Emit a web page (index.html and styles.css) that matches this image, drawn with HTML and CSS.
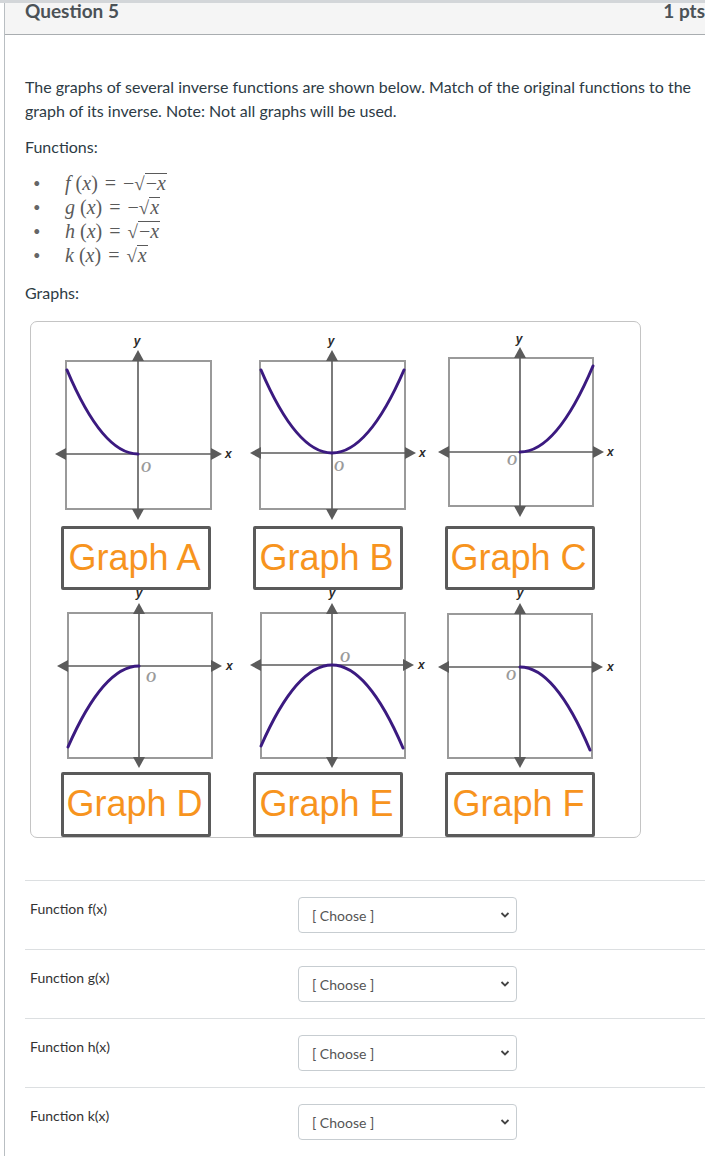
FILE: index.html
```html
<!DOCTYPE html>
<html>
<head>
<meta charset="utf-8">
<link rel="stylesheet" href="styles.css">
</head>
<body>
<div class="topband"></div>
<div class="question">
  <div class="q-header"><span class="q-title">Question 5</span><span class="q-pts">1 pts</span></div>
  <div class="q-body">
    <p>The graphs of several inverse functions are shown below. Match of the original functions to the graph of its inverse. Note: Not all graphs will be used.</p>
    <p>Functions:</p>
    <ul class="fn-list">
      <li><span class="math"><i>f</i><span class="sp"></span>(<i>x</i>)<span class="eq">=</span>−<span class="root"><span class="sqrt">√</span><span class="rad">−<i>x</i></span></span></span></li>
      <li><span class="math"><i>g</i><span class="sp"></span>(<i>x</i>)<span class="eq">=</span>−<span class="root"><span class="sqrt">√</span><span class="rad"><i>x</i></span></span></span></li>
      <li><span class="math"><i>h</i><span class="sp"></span>(<i>x</i>)<span class="eq">=</span><span class="root"><span class="sqrt">√</span><span class="rad">−<i>x</i></span></span></span></li>
      <li><span class="math"><i>k</i><span class="sp"></span>(<i>x</i>)<span class="eq">=</span><span class="root"><span class="sqrt">√</span><span class="rad"><i>x</i></span></span></span></li>
    </ul>
    <p class="graphs-title">Graphs:</p>

    <div class="graphs">
      <!-- Graph A -->
      <div class="cell row1">
        <svg class="plot p1" viewBox="0 0 192 190" width="192" height="190">
          <rect x="16" y="28" width="145" height="148" class="frame"/>
          <line x1="8" y1="121" x2="169" y2="121" class="axis"/>
          <line x1="88" y1="20" x2="88" y2="184" class="axis"/>
          <polygon points="5,121 16,115 16,127" class="arrow"/>
          <polygon points="172,121 161,115 161,127" class="arrow"/>
          <polygon points="88,17 82,28 94,28" class="arrow"/>
          <polygon points="88,187 82,176 94,176" class="arrow"/>
          <path d="M17 37 Q52.5 121 88 121" class="curve"/>
          <text x="87" y="12" class="lbl" text-anchor="middle">y</text>
          <text x="175" y="125" class="lbl">x</text>
          <text x="96" y="139" class="orig" text-anchor="middle">O</text>
        </svg>
        <div class="gname">Graph A</div>
      </div>
      <!-- Graph B -->
      <div class="cell row1">
        <svg class="plot p1" viewBox="0 0 192 190" width="192" height="190">
          <rect x="18" y="28" width="145" height="148" class="frame"/>
          <line x1="11" y1="120" x2="171" y2="120" class="axis"/>
          <line x1="90" y1="20" x2="90" y2="184" class="axis"/>
          <polygon points="8,120 19,114 19,126" class="arrow"/>
          <polygon points="174,120 163,114 163,126" class="arrow"/>
          <polygon points="90,17 84,28 96,28" class="arrow"/>
          <polygon points="90,187 84,176 96,176" class="arrow"/>
          <path d="M19 37 Q54.5 120 90 120 Q126 120 162 37" class="curve"/>
          <text x="89" y="12" class="lbl" text-anchor="middle">y</text>
          <text x="177" y="124" class="lbl">x</text>
          <text x="97" y="138" class="orig" text-anchor="middle">O</text>
        </svg>
        <div class="gname">Graph B</div>
      </div>
      <!-- Graph C -->
      <div class="cell row1">
        <svg class="plot p1" viewBox="0 0 192 190" width="192" height="190">
          <rect x="15" y="25" width="144" height="148" class="frame"/>
          <line x1="7" y1="119" x2="167" y2="119" class="axis"/>
          <line x1="86" y1="17" x2="86" y2="181" class="axis"/>
          <polygon points="4,119 15,113 15,125" class="arrow"/>
          <polygon points="170,119 159,113 159,125" class="arrow"/>
          <polygon points="86,14 80,25 92,25" class="arrow"/>
          <polygon points="86,184 80,173 92,173" class="arrow"/>
          <path d="M86 119 Q122.5 119 159 33" class="curve"/>
          <text x="85" y="10" class="lbl" text-anchor="middle">y</text>
          <text x="173" y="123" class="lbl">x</text>
          <text x="78" y="132" class="orig" text-anchor="middle">O</text>
        </svg>
        <div class="gname">Graph C</div>
      </div>
      <!-- Graph D -->
      <div class="cell row2">
        <svg class="plot p2" viewBox="0 0 192 182" width="192" height="182">
          <rect x="18" y="23" width="144" height="145" class="frame"/>
          <line x1="10" y1="76" x2="169" y2="76" class="axis"/>
          <line x1="89" y1="16" x2="89" y2="175" class="axis"/>
          <polygon points="7,76 18,70 18,82" class="arrow"/>
          <polygon points="172,76 161,70 161,82" class="arrow"/>
          <polygon points="89,13 83,24 95,24" class="arrow"/>
          <polygon points="89,178 83,167 95,167" class="arrow"/>
          <path d="M18 157 Q53.5 76 89 76" class="curve"/>
          <text x="89" y="7" class="lbl" text-anchor="middle">y</text>
          <text x="176" y="80" class="lbl">x</text>
          <text x="101" y="92" class="orig" text-anchor="middle">O</text>
        </svg>
        <div class="gname tall">Graph D</div>
      </div>
      <!-- Graph E -->
      <div class="cell row2">
        <svg class="plot p2" viewBox="0 0 192 182" width="192" height="182">
          <rect x="19" y="23" width="144" height="145" class="frame"/>
          <line x1="11" y1="75" x2="169" y2="75" class="axis"/>
          <line x1="90" y1="16" x2="90" y2="175" class="axis"/>
          <polygon points="8,75 19,69 19,81" class="arrow"/>
          <polygon points="172,75 161,69 161,81" class="arrow"/>
          <polygon points="90,13 84,24 96,24" class="arrow"/>
          <polygon points="90,178 84,167 96,167" class="arrow"/>
          <path d="M19 156 Q54.5 75 90 75 Q125.5 75 161 158" class="curve"/>
          <text x="90" y="7" class="lbl" text-anchor="middle">y</text>
          <text x="176" y="79" class="lbl">x</text>
          <text x="103" y="72" class="orig" text-anchor="middle">O</text>
        </svg>
        <div class="gname tall">Graph E</div>
      </div>
      <!-- Graph F -->
      <div class="cell row2">
        <svg class="plot p2" viewBox="0 0 192 182" width="192" height="182">
          <rect x="14" y="24" width="144" height="144" class="frame"/>
          <line x1="7" y1="77" x2="166" y2="77" class="axis"/>
          <line x1="86" y1="16" x2="86" y2="175" class="axis"/>
          <polygon points="4,77 15,71 15,83" class="arrow"/>
          <polygon points="169,77 158,71 158,83" class="arrow"/>
          <polygon points="86,13 80,24 92,24" class="arrow"/>
          <polygon points="86,178 80,167 92,167" class="arrow"/>
          <path d="M86 77 Q121 77 156 160" class="curve"/>
          <text x="86" y="7" class="lbl" text-anchor="middle">y</text>
          <text x="173" y="81" class="lbl">x</text>
          <text x="77" y="90" class="orig" text-anchor="middle">O</text>
        </svg>
        <div class="gname tall">Graph F</div>
      </div>
    </div>

    <div class="answers">
      <div class="answer-row">
        <div class="answer-label">Function f(x)</div>
        <div class="select"><span>[ Choose ]</span><svg class="chev" viewBox="0 0 10 8" width="10" height="8"><path d="M1.5 2 L5 5.5 L8.5 2"/></svg></div>
      </div>
      <div class="answer-row">
        <div class="answer-label">Function g(x)</div>
        <div class="select"><span>[ Choose ]</span><svg class="chev" viewBox="0 0 10 8" width="10" height="8"><path d="M1.5 2 L5 5.5 L8.5 2"/></svg></div>
      </div>
      <div class="answer-row">
        <div class="answer-label">Function h(x)</div>
        <div class="select"><span>[ Choose ]</span><svg class="chev" viewBox="0 0 10 8" width="10" height="8"><path d="M1.5 2 L5 5.5 L8.5 2"/></svg></div>
      </div>
      <div class="answer-row">
        <div class="answer-label">Function k(x)</div>
        <div class="select"><span>[ Choose ]</span><svg class="chev" viewBox="0 0 10 8" width="10" height="8"><path d="M1.5 2 L5 5.5 L8.5 2"/></svg></div>
      </div>
    </div>
  </div>
</div>
</body>
</html>
```
FILE: styles.css
```css
html, body {
  margin: 0;
  padding: 0;
  overflow: hidden;
  background: #fff;
}
body {
  font-family: Lato, "Open Sans", sans-serif;
  color: #2d3b45;
  width: 705px;
  height: 1163px;
}
.topband {
  height: 3px;
  background: #d3d6d9;
}
.question {
  margin-left: 4px;
  width: 716px;
  border-left: 1px solid #b9bec2;
  border-right: 1px solid #b9bec2;
}
.q-header {
  display: flex;
  justify-content: space-between;
  height: 31px;
  background: #f5f5f5;
  border-bottom: 1px solid #a9adb0;
  padding: 0 16px 0 20px;
  font-weight: 700;
  font-size: 19px;
  line-height: 15px;
  color: #4b5257;
}
.q-body {
  padding: 40px 0 0 20px;
}
.q-body p {
  margin: 0 0 12px;
  font-size: 16px;
  line-height: 24px;
}
.fn-list {
  list-style: none;
  margin: 0 0 14px;
  padding: 0;
}
.fn-list li {
  height: 24px;
  line-height: 24px;
  display: flex;
  align-items: center;
}
.fn-list li::before {
  content: "\2022";
  display: inline-block;
  width: 40px;
  padding-left: 8px;
  box-sizing: border-box;
  color: #666;
  font-size: 13px;
}
.math {
  font-family: "Liberation Serif", "DejaVu Serif", serif;
  font-size: 20px;
  color: #5a5a5a;
  display: inline-flex;
  align-items: baseline;
  white-space: nowrap;
}
.math i {
  font-style: italic;
}
.sp {
  display: inline-block;
  width: 5px;
}
.eq {
  margin: 0 7px;
}
.root {
  display: inline-flex;
  align-items: baseline;
}
.sqrt {
  font-size: 19px;
}
.rad {
  border-top: 1px solid #5a5a5a;
  line-height: 17px;
  padding: 1px 1px 0 1px;
}
.graphs-title {
  margin-bottom: 16px !important;
}
.graphs {
  width: 611px;
  margin-left: 5px;
  box-sizing: border-box;
  border: 1px solid #c4c4c4;
  border-radius: 7px;
  padding: 11px 0 0 19px;
  display: grid;
  grid-template-columns: 192px 192px 192px;
}
.cell {
  display: flex;
  flex-direction: column;
}
.plot {
  display: block;
}
.frame {
  fill: #fff;
  stroke: #9a9a9a;
  stroke-width: 2;
}
.axis {
  stroke: #5b5b5b;
  stroke-width: 1.6;
}
.arrow {
  fill: #5b5b5b;
}
.curve {
  fill: none;
  stroke: #3b1a80;
  stroke-width: 3;
  stroke-linecap: round;
}
.lbl {
  font-family: "Liberation Sans", Arial, sans-serif;
  font-style: italic;
  font-weight: 700;
  font-size: 12px;
  fill: #2a2a2a;
}
.orig {
  font-family: "Liberation Serif", serif;
  font-style: italic;
  font-weight: 700;
  font-size: 14px;
  fill: #9a9a9a;
}
.gname {
  width: 150px;
  height: 64px;
  box-sizing: border-box;
  margin: 3px 0 0 11px;
  border: 3px solid #5a5a5a;
  border-radius: 2px;
  padding-right: 3px;
  text-align: center;
  font-family: "Liberation Sans", Arial, sans-serif;
  font-size: 36px;
  line-height: 58px;
  color: #f7941e;
  background: #fff;
}
.gname.tall {
  height: 65px;
  margin-top: 0;
}
.answers {
  margin-top: 42px;
}
.answer-row {
  display: flex;
  height: 69px;
  box-sizing: border-box;
  border-top: 1px solid #dcdfe1;
}
.answer-label {
  width: 268px;
  padding: 18px 0 0 5px;
  font-size: 14px;
  line-height: 20px;
  color: #333;
}
.select {
  margin-top: 16px;
  width: 219px;
  height: 36px;
  box-sizing: border-box;
  border: 1px solid #c7cdd1;
  border-radius: 4px;
  display: flex;
  align-items: center;
  justify-content: space-between;
  padding: 0 6px 0 13px;
  font-size: 14px;
  color: #555;
  background: #fff;
}
.chev path {
  fill: none;
  stroke: #444;
  stroke-width: 1.8;
}
```
